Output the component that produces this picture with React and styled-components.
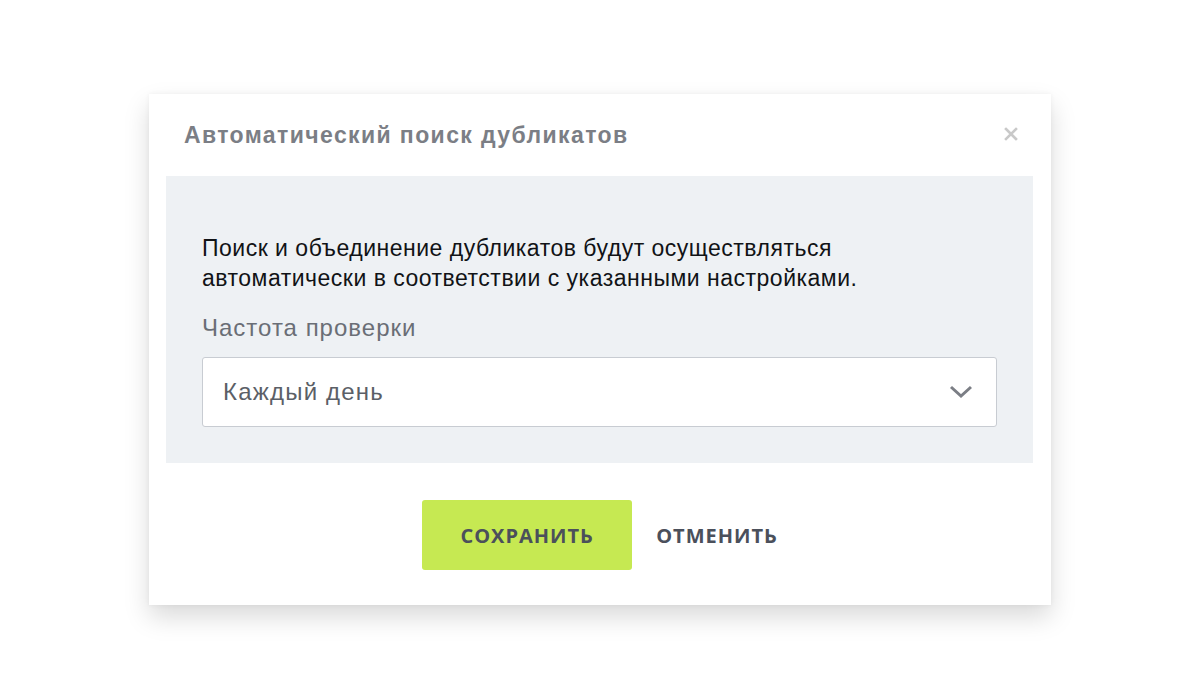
import styled, { createGlobalStyle } from 'styled-components'

const GlobalStyle = createGlobalStyle`
  body {
    margin: 0;
    background: #ffffff;
    font-family: "Liberation Sans", Arial, sans-serif;
  }
`

const Page = styled.div`
  display: flex;
  justify-content: center;
  padding: 94px 0 60px;
`

const Dialog = styled.div`
  width: 902px;
  background: #ffffff;
  box-shadow: 0 12px 24px rgba(0, 0, 0, 0.15), 0 0 5px rgba(0, 0, 0, 0.05);
`

const Header = styled.div`
  display: flex;
  align-items: center;
  justify-content: space-between;
  height: 82px;
  padding: 0 31px 0 35px;
  box-sizing: border-box;
`

const Title = styled.h2`
  margin: 0;
  font-size: 23px;
  letter-spacing: 1.4px;
  font-weight: 700;
  color: #7b7e85;
`

const Close = styled.button`
  border: none;
  background: none;
  padding: 0;
  width: 16px;
  height: 16px;
  cursor: pointer;
  display: flex;
`

const Body = styled.div`
  margin: 0 18px 0 17px;
  background: #eef1f4;
  padding: 57px 36px 36px;
`

const Text = styled.p`
  margin: 0;
  font-size: 23px;
  letter-spacing: 0.5px;
  line-height: 30px;
  color: #111316;
`

const Label = styled.div`
  margin-top: 20px;
  font-size: 24px;
  letter-spacing: 1px;
  line-height: 30px;
  color: #6a6e76;
`

const Select = styled.div`
  margin-top: 14px;
  height: 70px;
  box-sizing: border-box;
  background: #ffffff;
  border: 1px solid #c8ccd2;
  border-radius: 3px;
  display: flex;
  align-items: center;
  justify-content: space-between;
  padding: 0 22px 0 20px;
  font-size: 24px;
  letter-spacing: 1.2px;
  color: #5b5f67;
  cursor: pointer;
`

const Footer = styled.div`
  display: flex;
  justify-content: center;
  align-items: center;
  gap: 24px;
  padding: 37px 0 35px;
`

const Button = styled.button`
  font-family: "Open Sans", sans-serif;
  font-weight: 700;
  font-size: 20px;
  letter-spacing: 1px;
  color: #4b505b;
  border: none;
  border-radius: 3px;
  cursor: pointer;
  height: 70px;
  width: ${p => (p.$primary ? '210px' : 'auto')};
  padding: 0;
  background: ${p => (p.$primary ? '#c6e952' : 'transparent')};
`

const App = () => {
  return (
    <>
      <GlobalStyle />
      <Page>
        <Dialog>
          <Header>
            <Title>Автоматический поиск дубликатов</Title>
            <Close aria-label="Закрыть">
              <svg width="14" height="14" viewBox="0 0 14 14">
                <path d="M2 2 L12 12 M12 2 L2 12" stroke="#c9c9c9" strokeWidth="2.6" strokeLinecap="square" />
              </svg>
            </Close>
          </Header>
          <Body>
            <Text>
              Поиск и объединение дубликатов будут осуществляться
              <br />
              автоматически в соответствии с указанными настройками.
            </Text>
            <Label>Частота проверки</Label>
            <Select>
              <span>Каждый день</span>
              <svg width="26" height="16" viewBox="0 0 26 16">
                <path d="M3 3 L13 12 L23 3" fill="none" stroke="#7b7e85" strokeWidth="3" />
              </svg>
            </Select>
          </Body>
          <Footer>
            <Button $primary>СОХРАНИТЬ</Button>
            <Button>ОТМЕНИТЬ</Button>
          </Footer>
        </Dialog>
      </Page>
    </>
  )
}

export default App
